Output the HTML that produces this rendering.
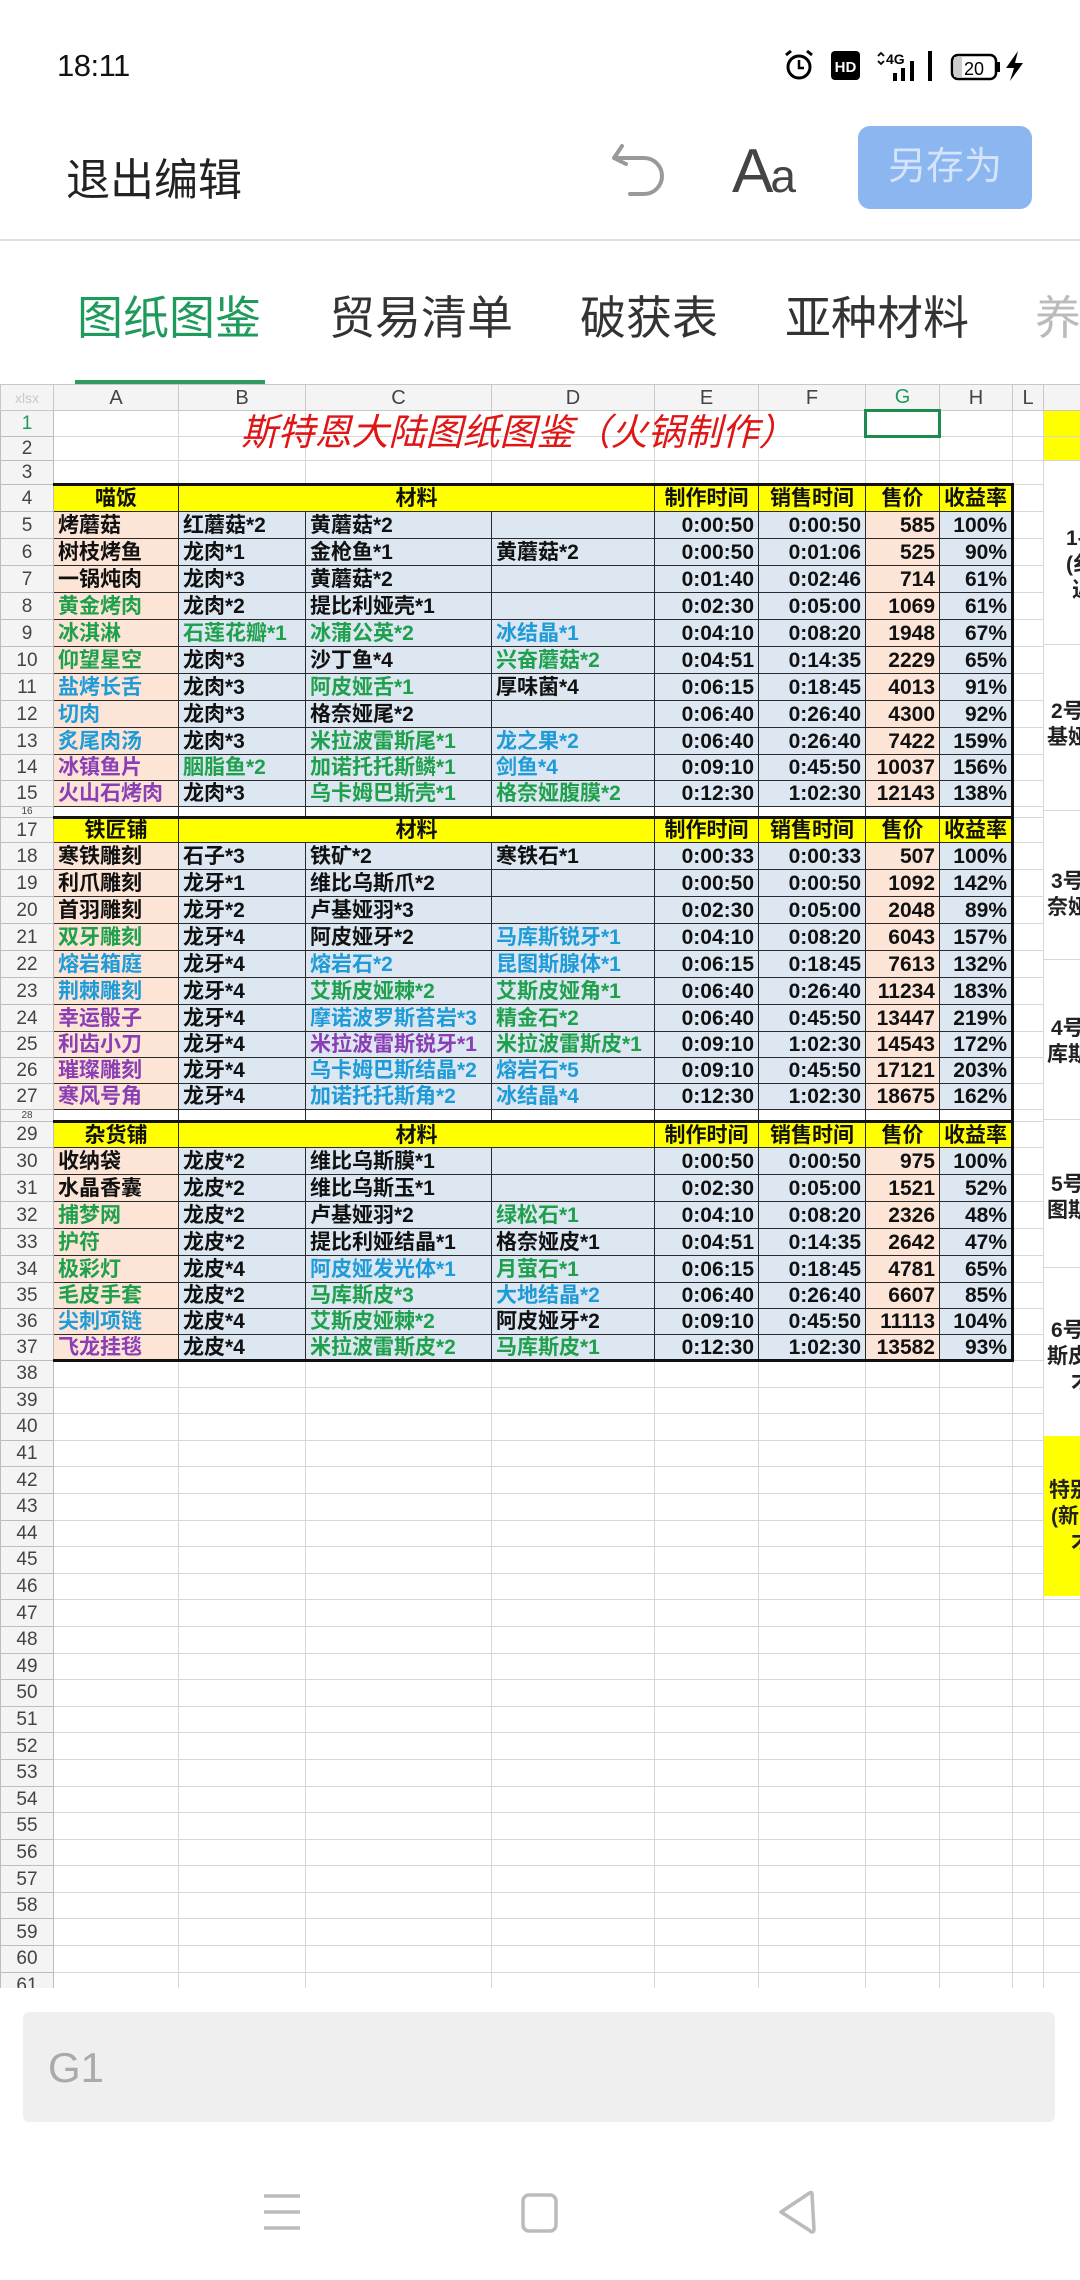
<!DOCTYPE html>
<html><head><meta charset="utf-8">
<style>
*{margin:0;padding:0;box-sizing:border-box}
body{width:1080px;height:2280px;background:#fff;position:relative;overflow:hidden;font-family:"Liberation Sans","Noto Sans CJK SC",sans-serif;color:#222}
.abs{position:absolute}
#sheet{position:absolute;left:0;top:384px;width:1080px;height:1604px;overflow:hidden}
table{border-collapse:collapse;table-layout:fixed;width:1080px}
td{border:1px solid #d6d6d6;white-space:nowrap;overflow:hidden;font-size:21px;line-height:1;padding:0 4px;font-weight:bold;color:#111}
td.rh{background:#f4f4f4;text-align:center;font-size:19px;color:#444;border-color:#bdbdbd;padding:0;font-weight:normal}
tr.ch td{background:#f4f4f4;text-align:center;font-size:20px;color:#444;border-color:#c8c8c8;font-weight:normal}
td.x{border:1.5px solid #2a2a2a}
td.a{background:#fce4d6}
td.m{background:#dde7f2}
td.n{background:#dde7f2;text-align:right;font-weight:bold;font-family:"Liberation Sans",sans-serif}
td.gp{background:#fce4d6;text-align:right;font-weight:bold;font-family:"Liberation Sans",sans-serif}
td.y{background:#ffff00;text-align:center}
tr.t td.x{border-top:3px solid #111}
tr.bt td.x{border-bottom:3px solid #111}
td.rb{border-right:3px solid #111 !important}
.k{color:#111}.g{color:#1ea04c}.b{color:#1f9bd8}.p{color:#8b3fb5}
</style></head><body>

<!-- status bar -->
<div class="abs" style="left:57px;top:48px;font-size:31px;color:#111;letter-spacing:-0.5px">18:11</div>
<svg class="abs" style="left:780px;top:46px" width="260" height="40" viewBox="780 46 260 40">
 <circle cx="799" cy="67" r="11" fill="none" stroke="#000" stroke-width="3"/>
 <path d="M799 60v8h5" fill="none" stroke="#000" stroke-width="2.5"/>
 <path d="M786 55l5-4M812 55l-5-4" stroke="#000" stroke-width="3"/>
 <rect x="831" y="51" width="29" height="29" rx="4" fill="#000"/>
 <text x="845.5" y="72" font-size="15" font-weight="bold" fill="#fff" text-anchor="middle" font-family="Liberation Sans">HD</text>
 <path d="M878 56l3-3 3 3M878 61l3 3 3-3" fill="none" stroke="#000" stroke-width="1.8"/>
 <text x="886" y="64" font-size="14" font-weight="bold" fill="#000" font-family="Liberation Sans">4G</text>
 <rect x="893" y="73" width="4" height="8" fill="#000"/><rect x="901" y="68" width="4" height="13" fill="#000"/><rect x="910" y="61" width="4" height="20" fill="#000"/><rect x="928" y="51" width="4" height="30" fill="#000"/>
 <rect x="952" y="55" width="44" height="24" rx="6" fill="none" stroke="#000" stroke-width="2.5"/>
 <rect x="954" y="57" width="8" height="20" fill="#ccc"/>
 <rect x="997" y="62" width="3" height="10" fill="#000"/>
 <text x="974" y="75" font-size="18" fill="#000" text-anchor="middle" font-family="Liberation Sans">20</text>
 <path d="M1018 51l-12 17h8l-4 13 13-18h-8z" fill="#000"/>
</svg>

<!-- toolbar -->
<div class="abs" style="left:66px;top:144px;font-size:44px;color:#222">退出编辑</div>
<svg class="abs" style="left:610px;top:142px" width="64" height="62" viewBox="0 0 64 62">
 <path d="M12 4 L4 16 L16 22" fill="none" stroke="#999" stroke-width="4" stroke-linecap="round" stroke-linejoin="round"/>
 <path d="M5 16 H34 A18 18 0 0 1 34 52 H20" fill="none" stroke="#999" stroke-width="4" stroke-linecap="round"/>
</svg>
<div class="abs" style="left:732px;top:136px;font-size:62px;color:#444;font-family:'Liberation Sans',sans-serif;letter-spacing:-3px">A<span style="font-size:46px">a</span></div>
<div class="abs" style="left:858px;top:126px;width:174px;height:83px;background:#8cb6f0;border-radius:12px;color:#d5e4fb;font-size:38px;text-align:center;line-height:83px">另存为</div>
<div class="abs" style="left:0;top:239px;width:1080px;height:2px;background:#e0e0e0"></div>

<!-- tabs -->
<div class="abs" style="left:77px;top:282px;font-size:46px;color:#1e9a5c">图纸图鉴</div>
<div class="abs" style="left:329px;top:282px;font-size:46px;color:#333">贸易清单</div>
<div class="abs" style="left:580px;top:282px;font-size:46px;color:#333">破获表</div>
<div class="abs" style="left:785px;top:282px;font-size:46px;color:#333">亚种材料</div>
<div class="abs" style="left:1035px;top:282px;font-size:46px;color:#bbb">养</div>
<div class="abs" style="left:75px;top:380px;width:190px;height:4px;background:#2e9a5e"></div>

<div id="sheet">
<table>
<colgroup><col style="width:53px"><col style="width:125px"><col style="width:127px"><col style="width:186px"><col style="width:163px"><col style="width:104px"><col style="width:107px"><col style="width:74px"><col style="width:73px"><col style="width:31px"><col style="width:37px"></colgroup>
<tr class="ch" style="height:26px"><td style="font-size:14px;color:#c8c8c8">xlsx</td><td>A</td><td>B</td><td>C</td><td>D</td><td>E</td><td>F</td><td style="color:#1e9a5c">G</td><td>H</td><td>L</td><td></td></tr>
<tr style="height:26px"><td class="rh" style="color:#1e9a5c">1</td><td></td><td></td><td></td><td></td><td></td><td></td><td style="border:3px solid #1e8a50"></td><td></td><td></td><td style="background:#ffff00"></td></tr>
<tr style="height:24px"><td class="rh">2</td><td></td><td></td><td></td><td></td><td></td><td></td><td></td><td></td><td></td><td style="background:#ffff00"></td></tr>
<tr style="height:24px"><td class="rh">3</td><td></td><td></td><td></td><td></td><td></td><td></td><td></td><td></td><td></td><td></td></tr>
<tr class="t" style="height:27px"><td class="rh">4</td><td class="x y">喵饭</td><td class="x y" colspan="3">材料</td><td class="x y">制作时间</td><td class="x y">销售时间</td><td class="x y">售价</td><td class="x y rb">收益率</td><td></td><td></td></tr>
<tr style="height:27px"><td class="rh">5</td><td class="x a k">烤蘑菇</td><td class="x m k">红蘑菇*2</td><td class="x m k">黄蘑菇*2</td><td class="x m"></td><td class="x n">0:00:50</td><td class="x n">0:00:50</td><td class="x gp">585</td><td class="x n rb">100%</td><td></td><td></td></tr>
<tr style="height:27px"><td class="rh">6</td><td class="x a k">树枝烤鱼</td><td class="x m k">龙肉*1</td><td class="x m k">金枪鱼*1</td><td class="x m k">黄蘑菇*2</td><td class="x n">0:00:50</td><td class="x n">0:01:06</td><td class="x gp">525</td><td class="x n rb">90%</td><td></td><td></td></tr>
<tr style="height:27px"><td class="rh">7</td><td class="x a k">一锅炖肉</td><td class="x m k">龙肉*3</td><td class="x m k">黄蘑菇*2</td><td class="x m"></td><td class="x n">0:01:40</td><td class="x n">0:02:46</td><td class="x gp">714</td><td class="x n rb">61%</td><td></td><td></td></tr>
<tr style="height:27px"><td class="rh">8</td><td class="x a g">黄金烤肉</td><td class="x m k">龙肉*2</td><td class="x m k">提比利娅壳*1</td><td class="x m"></td><td class="x n">0:02:30</td><td class="x n">0:05:00</td><td class="x gp">1069</td><td class="x n rb">61%</td><td></td><td></td></tr>
<tr style="height:27px"><td class="rh">9</td><td class="x a g">冰淇淋</td><td class="x m g">石莲花瓣*1</td><td class="x m g">冰蒲公英*2</td><td class="x m b">冰结晶*1</td><td class="x n">0:04:10</td><td class="x n">0:08:20</td><td class="x gp">1948</td><td class="x n rb">67%</td><td></td><td></td></tr>
<tr style="height:27px"><td class="rh">10</td><td class="x a g">仰望星空</td><td class="x m k">龙肉*3</td><td class="x m k">沙丁鱼*4</td><td class="x m g">兴奋蘑菇*2</td><td class="x n">0:04:51</td><td class="x n">0:14:35</td><td class="x gp">2229</td><td class="x n rb">65%</td><td></td><td></td></tr>
<tr style="height:27px"><td class="rh">11</td><td class="x a b">盐烤长舌</td><td class="x m k">龙肉*3</td><td class="x m g">阿皮娅舌*1</td><td class="x m k">厚味菌*4</td><td class="x n">0:06:15</td><td class="x n">0:18:45</td><td class="x gp">4013</td><td class="x n rb">91%</td><td></td><td></td></tr>
<tr style="height:27px"><td class="rh">12</td><td class="x a b">切肉</td><td class="x m k">龙肉*3</td><td class="x m k">格奈娅尾*2</td><td class="x m"></td><td class="x n">0:06:40</td><td class="x n">0:26:40</td><td class="x gp">4300</td><td class="x n rb">92%</td><td></td><td></td></tr>
<tr style="height:27px"><td class="rh">13</td><td class="x a b">炙尾肉汤</td><td class="x m k">龙肉*3</td><td class="x m g">米拉波雷斯尾*1</td><td class="x m b">龙之果*2</td><td class="x n">0:06:40</td><td class="x n">0:26:40</td><td class="x gp">7422</td><td class="x n rb">159%</td><td></td><td></td></tr>
<tr style="height:26px"><td class="rh">14</td><td class="x a p">冰镇鱼片</td><td class="x m g">胭脂鱼*2</td><td class="x m g">加诺托托斯鳞*1</td><td class="x m b">剑鱼*4</td><td class="x n">0:09:10</td><td class="x n">0:45:50</td><td class="x gp">10037</td><td class="x n rb">156%</td><td></td><td></td></tr>
<tr style="height:26px"><td class="rh">15</td><td class="x a p">火山石烤肉</td><td class="x m k">龙肉*3</td><td class="x m g">乌卡姆巴斯壳*1</td><td class="x m g">格奈娅腹膜*2</td><td class="x n">0:12:30</td><td class="x n">1:02:30</td><td class="x gp">12143</td><td class="x n rb">138%</td><td></td><td></td></tr>
<tr style="height:11px"><td class="rh" style="font-size:10px">16</td><td class="x"></td><td class="x"></td><td class="x"></td><td class="x"></td><td class="x"></td><td class="x"></td><td class="x"></td><td class="x rb"></td><td></td><td></td></tr>
<tr class="t" style="height:25px"><td class="rh">17</td><td class="x y">铁匠铺</td><td class="x y" colspan="3">材料</td><td class="x y">制作时间</td><td class="x y">销售时间</td><td class="x y">售价</td><td class="x y rb">收益率</td><td></td><td></td></tr>
<tr style="height:27px"><td class="rh">18</td><td class="x a k">寒铁雕刻</td><td class="x m k">石子*3</td><td class="x m k">铁矿*2</td><td class="x m k">寒铁石*1</td><td class="x n">0:00:33</td><td class="x n">0:00:33</td><td class="x gp">507</td><td class="x n rb">100%</td><td></td><td></td></tr>
<tr style="height:27px"><td class="rh">19</td><td class="x a k">利爪雕刻</td><td class="x m k">龙牙*1</td><td class="x m k">维比乌斯爪*2</td><td class="x m"></td><td class="x n">0:00:50</td><td class="x n">0:00:50</td><td class="x gp">1092</td><td class="x n rb">142%</td><td></td><td></td></tr>
<tr style="height:27px"><td class="rh">20</td><td class="x a k">首羽雕刻</td><td class="x m k">龙牙*2</td><td class="x m k">卢基娅羽*3</td><td class="x m"></td><td class="x n">0:02:30</td><td class="x n">0:05:00</td><td class="x gp">2048</td><td class="x n rb">89%</td><td></td><td></td></tr>
<tr style="height:27px"><td class="rh">21</td><td class="x a g">双牙雕刻</td><td class="x m k">龙牙*4</td><td class="x m k">阿皮娅牙*2</td><td class="x m b">马库斯锐牙*1</td><td class="x n">0:04:10</td><td class="x n">0:08:20</td><td class="x gp">6043</td><td class="x n rb">157%</td><td></td><td></td></tr>
<tr style="height:27px"><td class="rh">22</td><td class="x a b">熔岩箱庭</td><td class="x m k">龙牙*4</td><td class="x m b">熔岩石*2</td><td class="x m b">昆图斯腺体*1</td><td class="x n">0:06:15</td><td class="x n">0:18:45</td><td class="x gp">7613</td><td class="x n rb">132%</td><td></td><td></td></tr>
<tr style="height:27px"><td class="rh">23</td><td class="x a b">荆棘雕刻</td><td class="x m k">龙牙*4</td><td class="x m g">艾斯皮娅棘*2</td><td class="x m g">艾斯皮娅角*1</td><td class="x n">0:06:40</td><td class="x n">0:26:40</td><td class="x gp">11234</td><td class="x n rb">183%</td><td></td><td></td></tr>
<tr style="height:27px"><td class="rh">24</td><td class="x a p">幸运骰子</td><td class="x m k">龙牙*4</td><td class="x m b">摩诺波罗斯苔岩*3</td><td class="x m g">精金石*2</td><td class="x n">0:06:40</td><td class="x n">0:45:50</td><td class="x gp">13447</td><td class="x n rb">219%</td><td></td><td></td></tr>
<tr style="height:26px"><td class="rh">25</td><td class="x a p">利齿小刀</td><td class="x m k">龙牙*4</td><td class="x m p">米拉波雷斯锐牙*1</td><td class="x m g">米拉波雷斯皮*1</td><td class="x n">0:09:10</td><td class="x n">1:02:30</td><td class="x gp">14543</td><td class="x n rb">172%</td><td></td><td></td></tr>
<tr style="height:26px"><td class="rh">26</td><td class="x a p">璀璨雕刻</td><td class="x m k">龙牙*4</td><td class="x m b">乌卡姆巴斯结晶*2</td><td class="x m b">熔岩石*5</td><td class="x n">0:09:10</td><td class="x n">0:45:50</td><td class="x gp">17121</td><td class="x n rb">203%</td><td></td><td></td></tr>
<tr style="height:26px"><td class="rh">27</td><td class="x a p">寒风号角</td><td class="x m k">龙牙*4</td><td class="x m b">加诺托托斯角*2</td><td class="x m b">冰结晶*4</td><td class="x n">0:12:30</td><td class="x n">1:02:30</td><td class="x gp">18675</td><td class="x n rb">162%</td><td></td><td></td></tr>
<tr style="height:12px"><td class="rh" style="font-size:10px">28</td><td class="x"></td><td class="x"></td><td class="x"></td><td class="x"></td><td class="x"></td><td class="x"></td><td class="x"></td><td class="x rb"></td><td></td><td></td></tr>
<tr class="t" style="height:26px"><td class="rh">29</td><td class="x y">杂货铺</td><td class="x y" colspan="3">材料</td><td class="x y">制作时间</td><td class="x y">销售时间</td><td class="x y">售价</td><td class="x y rb">收益率</td><td></td><td></td></tr>
<tr style="height:27px"><td class="rh">30</td><td class="x a k">收纳袋</td><td class="x m k">龙皮*2</td><td class="x m k">维比乌斯膜*1</td><td class="x m"></td><td class="x n">0:00:50</td><td class="x n">0:00:50</td><td class="x gp">975</td><td class="x n rb">100%</td><td></td><td></td></tr>
<tr style="height:27px"><td class="rh">31</td><td class="x a k">水晶香囊</td><td class="x m k">龙皮*2</td><td class="x m k">维比乌斯玉*1</td><td class="x m"></td><td class="x n">0:02:30</td><td class="x n">0:05:00</td><td class="x gp">1521</td><td class="x n rb">52%</td><td></td><td></td></tr>
<tr style="height:27px"><td class="rh">32</td><td class="x a g">捕梦网</td><td class="x m k">龙皮*2</td><td class="x m k">卢基娅羽*2</td><td class="x m g">绿松石*1</td><td class="x n">0:04:10</td><td class="x n">0:08:20</td><td class="x gp">2326</td><td class="x n rb">48%</td><td></td><td></td></tr>
<tr style="height:27px"><td class="rh">33</td><td class="x a g">护符</td><td class="x m k">龙皮*2</td><td class="x m k">提比利娅结晶*1</td><td class="x m k">格奈娅皮*1</td><td class="x n">0:04:51</td><td class="x n">0:14:35</td><td class="x gp">2642</td><td class="x n rb">47%</td><td></td><td></td></tr>
<tr style="height:27px"><td class="rh">34</td><td class="x a g">极彩灯</td><td class="x m k">龙皮*4</td><td class="x m b">阿皮娅发光体*1</td><td class="x m g">月萤石*1</td><td class="x n">0:06:15</td><td class="x n">0:18:45</td><td class="x gp">4781</td><td class="x n rb">65%</td><td></td><td></td></tr>
<tr style="height:26px"><td class="rh">35</td><td class="x a g">毛皮手套</td><td class="x m k">龙皮*2</td><td class="x m g">马库斯皮*3</td><td class="x m b">大地结晶*2</td><td class="x n">0:06:40</td><td class="x n">0:26:40</td><td class="x gp">6607</td><td class="x n rb">85%</td><td></td><td></td></tr>
<tr style="height:26px"><td class="rh">36</td><td class="x a b">尖刺项链</td><td class="x m k">龙皮*4</td><td class="x m g">艾斯皮娅棘*2</td><td class="x m k">阿皮娅牙*2</td><td class="x n">0:09:10</td><td class="x n">0:45:50</td><td class="x gp">11113</td><td class="x n rb">104%</td><td></td><td></td></tr>
<tr class="bt" style="height:26px"><td class="rh">37</td><td class="x a p">飞龙挂毯</td><td class="x m k">龙皮*4</td><td class="x m g">米拉波雷斯皮*2</td><td class="x m g">马库斯皮*1</td><td class="x n">0:12:30</td><td class="x n">1:02:30</td><td class="x gp">13582</td><td class="x n rb">93%</td><td></td><td></td></tr>
<tr style="height:26.6px"><td class="rh">38</td><td></td><td></td><td></td><td></td><td></td><td></td><td></td><td></td><td></td><td></td></tr>
<tr style="height:26.6px"><td class="rh">39</td><td></td><td></td><td></td><td></td><td></td><td></td><td></td><td></td><td></td><td></td></tr>
<tr style="height:26.6px"><td class="rh">40</td><td></td><td></td><td></td><td></td><td></td><td></td><td></td><td></td><td></td><td></td></tr>
<tr style="height:26.6px"><td class="rh">41</td><td></td><td></td><td></td><td></td><td></td><td></td><td></td><td></td><td></td><td></td></tr>
<tr style="height:26.6px"><td class="rh">42</td><td></td><td></td><td></td><td></td><td></td><td></td><td></td><td></td><td></td><td></td></tr>
<tr style="height:26.6px"><td class="rh">43</td><td></td><td></td><td></td><td></td><td></td><td></td><td></td><td></td><td></td><td></td></tr>
<tr style="height:26.6px"><td class="rh">44</td><td></td><td></td><td></td><td></td><td></td><td></td><td></td><td></td><td></td><td></td></tr>
<tr style="height:26.6px"><td class="rh">45</td><td></td><td></td><td></td><td></td><td></td><td></td><td></td><td></td><td></td><td></td></tr>
<tr style="height:26.6px"><td class="rh">46</td><td></td><td></td><td></td><td></td><td></td><td></td><td></td><td></td><td></td><td></td></tr>
<tr style="height:26.6px"><td class="rh">47</td><td></td><td></td><td></td><td></td><td></td><td></td><td></td><td></td><td></td><td></td></tr>
<tr style="height:26.6px"><td class="rh">48</td><td></td><td></td><td></td><td></td><td></td><td></td><td></td><td></td><td></td><td></td></tr>
<tr style="height:26.6px"><td class="rh">49</td><td></td><td></td><td></td><td></td><td></td><td></td><td></td><td></td><td></td><td></td></tr>
<tr style="height:26.6px"><td class="rh">50</td><td></td><td></td><td></td><td></td><td></td><td></td><td></td><td></td><td></td><td></td></tr>
<tr style="height:26.6px"><td class="rh">51</td><td></td><td></td><td></td><td></td><td></td><td></td><td></td><td></td><td></td><td></td></tr>
<tr style="height:26.6px"><td class="rh">52</td><td></td><td></td><td></td><td></td><td></td><td></td><td></td><td></td><td></td><td></td></tr>
<tr style="height:26.6px"><td class="rh">53</td><td></td><td></td><td></td><td></td><td></td><td></td><td></td><td></td><td></td><td></td></tr>
<tr style="height:26.6px"><td class="rh">54</td><td></td><td></td><td></td><td></td><td></td><td></td><td></td><td></td><td></td><td></td></tr>
<tr style="height:26.6px"><td class="rh">55</td><td></td><td></td><td></td><td></td><td></td><td></td><td></td><td></td><td></td><td></td></tr>
<tr style="height:26.6px"><td class="rh">56</td><td></td><td></td><td></td><td></td><td></td><td></td><td></td><td></td><td></td><td></td></tr>
<tr style="height:26.6px"><td class="rh">57</td><td></td><td></td><td></td><td></td><td></td><td></td><td></td><td></td><td></td><td></td></tr>
<tr style="height:26.6px"><td class="rh">58</td><td></td><td></td><td></td><td></td><td></td><td></td><td></td><td></td><td></td><td></td></tr>
<tr style="height:26.6px"><td class="rh">59</td><td></td><td></td><td></td><td></td><td></td><td></td><td></td><td></td><td></td><td></td></tr>
<tr style="height:26.6px"><td class="rh">60</td><td></td><td></td><td></td><td></td><td></td><td></td><td></td><td></td><td></td><td></td></tr>
<tr style="height:26.6px"><td class="rh">61</td><td></td><td></td><td></td><td></td><td></td><td></td><td></td><td></td><td></td><td></td></tr>
</table>

<!-- title -->
<div class="abs" style="left:178px;top:27px;width:680px;text-align:center;font-size:37px;font-style:italic;color:#e01515;line-height:44px">斯特恩大陆图纸图鉴（火锅制作）</div>

<!-- right merged column -->
<div class="abs" style="left:1044px;top:100px;width:36px;height:1112px;background:#fff;overflow:hidden;font-size:21px;font-weight:bold;color:#222;line-height:26px">
 <div class="abs" style="left:0;top:160px;width:36px;height:1px;background:#d6d6d6"></div>
 <div class="abs" style="left:0;top:326px;width:36px;height:1px;background:#d6d6d6"></div>
 <div class="abs" style="left:0;top:475px;width:36px;height:1px;background:#d6d6d6"></div>
 <div class="abs" style="left:0;top:635px;width:36px;height:1px;background:#d6d6d6"></div>
 <div class="abs" style="left:0;top:783px;width:36px;height:1px;background:#d6d6d6"></div>
 <div class="abs" style="left:0;top:952px;width:36px;height:160px;background:#ffff00"></div>
 <div class="abs" style="left:22px;top:42px;white-space:nowrap">1-<br>(纟<br><span style="margin-left:6px">近</span></div>
 <div class="abs" style="left:7px;top:215px;white-space:nowrap">2号<br><span style="margin-left:-4px">基娅</span></div>
 <div class="abs" style="left:7px;top:385px;white-space:nowrap">3号<br><span style="margin-left:-4px">奈娅</span></div>
 <div class="abs" style="left:7px;top:532px;white-space:nowrap">4号<br><span style="margin-left:-4px">库斯</span></div>
 <div class="abs" style="left:7px;top:688px;white-space:nowrap">5号<br><span style="margin-left:-4px">图斯</span></div>
 <div class="abs" style="left:7px;top:834px;white-space:nowrap">6号<br><span style="margin-left:-4px">斯皮</span><br><span style="margin-left:20px">才</span></div>
 <div class="abs" style="left:5px;top:994px;white-space:nowrap">特别<br><span style="margin-left:2px">(新</span><br><span style="margin-left:22px">才</span></div>
</div>
</div>

<!-- formula bar -->
<div class="abs" style="left:23px;top:2012px;width:1032px;height:110px;background:#efefef;border-radius:6px"></div>
<div class="abs" style="left:48px;top:2044px;font-size:42px;color:#aaa;font-family:'Liberation Sans',sans-serif">G1</div>

<!-- nav bar -->
<svg class="abs" style="left:250px;top:2185px" width="600" height="60" viewBox="250 2185 600 60">
 <path d="M264 2196h36M264 2212h36M264 2228h36" stroke="#bbb" stroke-width="3.5"/>
 <rect x="523" y="2195" width="33" height="36" rx="6" fill="none" stroke="#bbb" stroke-width="3.5"/>
 <path d="M812 2194 L814 2230 Q813 2234 809 2230 L781 2212 L808 2194 Q812 2191 812 2194" fill="none" stroke="#bbb" stroke-width="3.5" stroke-linejoin="round"/>
</svg>
</body></html>
